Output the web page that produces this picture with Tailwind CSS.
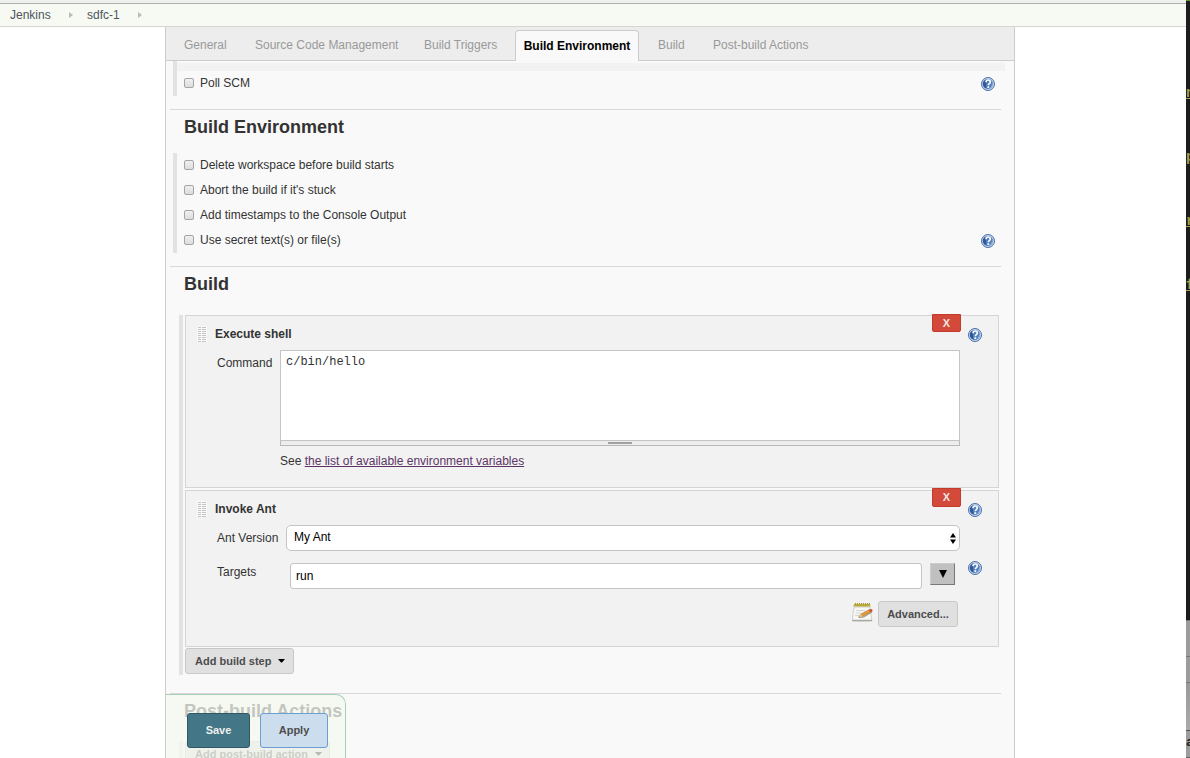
<!DOCTYPE html>
<html lang="en">
<head>
<meta charset="utf-8">
<title>sdfc-1 Config [Jenkins]</title>
<script src="https://cdn.jsdelivr.net/npm/@tailwindcss/browser@4"></script>
</head>
<body class="flex h-screen overflow-hidden bg-white font-['Helvetica','Liberation_Sans',Arial,sans-serif] text-[12px] leading-4 text-[#333]">

<!-- Shared icon symbols -->
<svg class="hidden" aria-hidden="true">
  <symbol id="help" viewBox="0 0 14 14">
    <circle cx="7" cy="7" r="6.500" fill="#c3d3ea" stroke="#4a71ad"/>
    <circle cx="7" cy="7" r="5" fill="#5480bd"/>
    <path d="M2 8.200A5.100 5.100 0 0 1 5.500 2.200C4.800 5.500 4.800 8.500 5.500 11.700A5 5 0 0 1 2 8.200Z" fill="#30599a"/>
    <path d="M8.500 11.800A5 5 0 0 0 12 8V5.500C11 8.500 10 10 8.500 11.800Z" fill="#9ab8de"/>
    <path d="M5 5.200C5 3.500 6 3 7.100 3C8.400 3 9.300 3.800 9.300 4.900C9.300 6.600 7.300 6.500 7.300 8.300" fill="none" stroke="#fff" stroke-width="1.600"/>
    <rect x="6.400" y="9.300" width="1.800" height="1.700" fill="#fff"/>
  </symbol>
  <symbol id="grip" viewBox="0 0 10 16">
    <rect width="10" height="16" fill="#fafafa"/>
    <path d="M1 1.500H9M1 3.500H9M1 5.500H9M1 7.500H9M1 9.500H9M1 11.500H9M1 13.500H9M1 15.500H9" stroke="#c4c4c4" stroke-dasharray="3 1 1 0 3 1"/>
  </symbol>
</svg>

<div class="flex min-w-0 flex-1 flex-col">
  <div class="h-[4px] shrink-0 border-b border-[#b0b0b0] bg-[#f0f0f0]"></div>
  <nav class="flex h-[23px] shrink-0 items-center border-b border-[#d3d7cf] bg-[#f6faf2] pl-[10px] text-[#4d545d]" aria-label="Breadcrumb">
    <a href="#" class="w-[59px]">Jenkins</a>
    <svg class="mr-[14px] h-[6px] w-1" viewBox="0 0 4 6"><path d="M0 0L4 3L0 6Z" fill="#babdb6"/></svg>
    <a href="#" class="w-[51px]">sdfc-1</a>
    <svg class="h-[6px] w-1" viewBox="0 0 4 6"><path d="M0 0L4 3L0 6Z" fill="#babdb6"/></svg>
  </nav>

  <div class="flex min-h-0 flex-1 justify-center pr-[6px]">
    <main class="relative w-full max-w-[850px] overflow-hidden border-x border-[#ccc] bg-[#f9f9f9]">
      <div class="flex h-[34px] items-end border-b border-[#ccc] bg-[#ededed] pl-[9px] text-[#999]" role="tablist">
        <button role="tab" class="h-[30px] w-[71px] pl-[9px] text-left">General</button>
        <button role="tab" class="h-[30px] w-[169px] pl-[9px] text-left whitespace-nowrap">Source Code Management</button>
        <button role="tab" class="h-[30px] w-[100px] pl-[9px] text-left whitespace-nowrap">Build Triggers</button>
        <button role="tab" aria-selected="true" class="-mb-px h-[31px] w-[124px] rounded-t-[4px] border border-b-0 border-[#ccc] bg-[#f9f9f9] pb-px text-[12px] font-bold whitespace-nowrap text-black">Build Environment</button>
        <button role="tab" class="ml-[10px] h-[30px] w-[55px] pl-[9px] text-left">Build</button>
        <button role="tab" class="h-[30px] pl-[9px] text-left whitespace-nowrap">Post-build Actions</button>
      </div>

      <section class="mr-[13px] ml-1 pb-[13px]">
        <div class="ml-[3px] border-l-4 border-[#e2e2e2] pt-[2px]">
          <div class="-mr-1 h-2 bg-[#f2f2f2]"></div>
          <div class="flex h-[25px] items-center pr-[6px] pl-[7px]">
            <label class="mb-[2px] flex items-center gap-[6px]"><input type="checkbox" class="h-[10px] w-[10px] appearance-none rounded-[2px] border border-[#a5a5a5] bg-linear-to-b from-[#f0f0f0] to-[#dcdcdc]">Poll SCM</label>
            <button class="ml-auto" aria-label="Help"><svg class="h-[14px] w-[14px]"><use href="#help"/></svg></button>
          </div>
        </div>
      </section>

      <section class="mr-[13px] ml-1 border-t border-[#d8d8d8] pt-2 pb-[13px]">
        <h2 class="ml-[14px] text-[18px] leading-[18px] font-bold">Build Environment</h2>
        <div class="mt-[17px] ml-[3px] border-l-4 border-[#e2e2e2] pr-[6px] pl-[7px]">
          <div class="flex h-[25px] items-center"><label class="mb-[2px] flex items-center gap-[6px]"><input type="checkbox" class="h-[10px] w-[10px] appearance-none rounded-[2px] border border-[#a5a5a5] bg-linear-to-b from-[#f0f0f0] to-[#dcdcdc]">Delete workspace before build starts</label></div>
          <div class="flex h-[25px] items-center"><label class="mb-[2px] flex items-center gap-[6px]"><input type="checkbox" class="h-[10px] w-[10px] appearance-none rounded-[2px] border border-[#a5a5a5] bg-linear-to-b from-[#f0f0f0] to-[#dcdcdc]">Abort the build if it's stuck</label></div>
          <div class="flex h-[25px] items-center"><label class="mb-[2px] flex items-center gap-[6px]"><input type="checkbox" class="h-[10px] w-[10px] appearance-none rounded-[2px] border border-[#a5a5a5] bg-linear-to-b from-[#f0f0f0] to-[#dcdcdc]">Add timestamps to the Console Output</label></div>
          <div class="flex h-[25px] items-center">
            <label class="mb-[2px] flex items-center gap-[6px]"><input type="checkbox" class="h-[10px] w-[10px] appearance-none rounded-[2px] border border-[#a5a5a5] bg-linear-to-b from-[#f0f0f0] to-[#dcdcdc]">Use secret text(s) or file(s)</label>
            <button class="ml-auto" aria-label="Help"><svg class="h-[14px] w-[14px]"><use href="#help"/></svg></button>
          </div>
        </div>
      </section>

      <section class="mr-[13px] ml-1 border-t border-[#d8d8d8] pt-2 pb-[18px]">
        <h2 class="ml-[14px] text-[18px] leading-[18px] font-bold">Build</h2>
        <div class="mt-[22px] mr-[2px] ml-[9px] border-l-4 border-[#e2e2e2] pb-px pl-[2px]">

          <div class="relative border border-[#d5d5d5] bg-[#f2f2f2] pt-[10px] pb-[18px] pl-[11px]">
            <button class="absolute -top-[2px] right-[37px] h-[18px] w-[29px] rounded-b-[2px] border border-[#c23b2a] bg-[#d34a3a] text-[11px] leading-4 font-bold text-[#f2e4e2]" aria-label="Delete step">X</button>
            <div class="flex h-4 items-center pr-4">
              <svg class="mr-2 h-4 w-[10px]"><use href="#grip"/></svg>
              <h3 class="font-bold">Execute shell</h3>
              <button class="mt-[2px] ml-auto" aria-label="Help"><svg class="h-[14px] w-[14px]"><use href="#help"/></svg></button>
            </div>
            <div class="mt-2 flex pr-[38px] pl-5">
              <label for="cmd" class="w-[63px] shrink-0 pt-[5px]">Command</label>
              <div class="min-w-0 flex-1">
                <textarea id="cmd" spellcheck="false" class="block h-[91px] w-full resize-none border border-[#c4c4c4] bg-white px-[5px] pt-[3px] font-['Liberation_Mono',monospace] text-[12px] leading-4 outline-none">c/bin/hello</textarea>
                <div class="flex h-[5px] justify-center border-x border-b border-[#b8b8b8] bg-[#ededed] pt-px"><span class="h-[2px] w-6 bg-[#a0a0a0]"></span></div>
                <p class="mt-[7px]">See <a href="#" class="text-[#5c3566] underline">the list of available environment variables</a></p>
              </div>
            </div>
          </div>

          <div class="relative mt-[2px] border border-[#d5d5d5] bg-[#f2f2f2] pt-[10px] pb-[19px] pl-[11px]">
            <button class="absolute -top-[3px] right-[37px] h-[19px] w-[29px] rounded-b-[2px] border border-[#c23b2a] bg-[#d34a3a] pb-px text-[11px] leading-4 font-bold text-[#f2e4e2]" aria-label="Delete step">X</button>
            <div class="flex h-4 items-center pr-4">
              <svg class="mr-2 h-4 w-[10px]"><use href="#grip"/></svg>
              <h3 class="font-bold">Invoke Ant</h3>
              <button class="mt-[2px] ml-auto" aria-label="Help"><svg class="h-[14px] w-[14px]"><use href="#help"/></svg></button>
            </div>
            <div class="mt-2 flex items-center pr-[38px] pl-5">
              <label for="ant" class="w-[69px] shrink-0">Ant Version</label>
              <div class="relative min-w-0 flex-1">
                <select id="ant" class="block h-[26px] w-full appearance-none rounded-[5px] border border-[#c4c4c4] bg-white px-[7px] pb-[2px] text-black"><option>My Ant</option></select>
                <svg class="pointer-events-none absolute top-2 right-1 h-[11px] w-[6px]" viewBox="0 0 6 11"><path d="M3 0L6 4.500H0ZM3 11L6 6.500H0Z"/></svg>
              </div>
            </div>
            <div class="mt-3 flex items-start pr-4 pl-5">
              <label for="targets" class="w-[73px] shrink-0 pt-px">Targets</label>
              <input id="targets" type="text" value="run" class="h-[26px] min-w-0 flex-1 rounded-[3px] border border-[#c4c4c4] bg-white px-[5px] text-black">
              <button class="ml-2 flex h-[22px] w-[25px] items-center justify-center border border-[#ccc] border-r-[#777] border-b-[#777] bg-[#c0c0c0]" aria-label="Expand"><svg class="h-[8px] w-[8px]" viewBox="0 0 8 8"><path d="M0 0H8L4 8Z"/></svg></button>
              <button class="mt-[-2px] ml-[13px]" aria-label="Help"><svg class="h-[14px] w-[14px]"><use href="#help"/></svg></button>
            </div>
            <div class="mt-3 flex items-start justify-end pr-10">
              <svg class="mt-[2px] mr-[5px] h-5 w-[21px]" viewBox="0 0 21 20">
                <path d="M2 4H18L20 17.500Q10 19 0 17.500Z" fill="#f7f7f5" stroke="#d0d0cb"/>
                <path d="M0 17.500H20" stroke="#aaaaa5" stroke-width="1.500"/>
                <path d="M2 1H18L18.500 3.500H1.500Z" fill="#b9a83c"/>
                <path d="M3 .5H18" stroke="#a08f35" stroke-dasharray="1 1"/>
                <path d="M4 7.500H13M3.500 10H10M3 12.500H7" stroke="#d5d5d2"/>
                <path d="M7 14.500L12 14L20 9" stroke="#9b9b95" fill="none"/>
                <path d="M6.500 14L9 11.200L17.500 6.500L19 9L10.500 13.500Z" fill="#e69a3c" stroke="#a06a25" stroke-width=".6"/>
                <path d="M6.500 14L9 11.200L10.500 13.500Z" fill="#e8d3a4"/>
                <path d="M17 6.800L19 6Q21 6.500 20.500 8.200L18.700 9.200Z" fill="#cf4a3b"/>
              </svg>
              <button class="h-[26px] w-20 rounded-[3px] border border-[#c8c8c8] bg-[#e0e0e0] text-[11px] font-bold text-[#4d4d4d]">Advanced...</button>
            </div>
          </div>

          <button class="mt-px flex h-[26px] w-[109px] items-center gap-[7px] rounded-[3px] border border-[#c8c8c8] bg-[#e0e0e0] pl-[9px] text-[11px] font-bold whitespace-nowrap text-[#4d4d4d]">Add build step<svg class="h-[4px] w-[7px] shrink-0" viewBox="0 0 7 4"><path d="M0 0H7L4 3.500H3Z" fill="#000"/></svg></button>
        </div>
      </section>

      <section class="mr-[13px] ml-1 border-t border-[#d8d8d8] pt-2">
        <h2 class="ml-[14px] text-[18px] leading-[18px] font-bold">Post-build Actions</h2>
        <div class="mt-[21px] ml-[9px] border-l-4 border-[#e2e2e2] pl-[2px]">
          <button class="flex h-[26px] w-[145px] items-center gap-[7px] rounded-[3px] border border-[#c8c8c8] bg-[#e0e0e0] pl-[9px] text-[11px] font-bold whitespace-nowrap text-[#4d4d4d]">Add post-build action<svg class="h-[4px] w-[7px] shrink-0" viewBox="0 0 7 4"><path d="M0 0H7L4 3.500H3Z" fill="#000"/></svg></button>
        </div>
      </section>

      <!-- Floating save bar -->
      <div class="absolute bottom-0 left-0 flex h-16 w-[180px] gap-[10px] rounded-tr-[10px] border-t border-r border-[#a8d0b8] bg-[#f4f8ef]/75 pt-[18px] pl-[21px] text-[11px] font-bold">
        <button class="h-[35px] w-[63px] rounded-[3px] border border-[#2f5866] bg-[#437787] pb-px text-[#eee]">Save</button>
        <button class="h-[35px] w-[68px] rounded-[3px] border border-[#6a9fd4] bg-[#ccdded] pb-px text-[#4d4d4d]">Apply</button>
      </div>
    </main>
  </div>
</div>

<!-- Sliver of the window behind -->
<aside class="flex w-1 shrink-0 flex-col overflow-hidden bg-[#9c9c9c] font-['Liberation_Mono',monospace] font-bold text-[#a5a04c]" aria-hidden="true">
  <div class="h-[620px] shrink-0 border-t border-[#5f9a2c] bg-[#1c1c1c] pt-[84px] text-[14px]">
    <div class="h-16 underline">n</div>
    <div class="h-16 underline">p</div>
    <div class="h-16 underline">r</div>
    <div class="h-16 underline">f</div>
  </div>
  <div class="h-[37px] shrink-0 border-y border-[#777]"></div>
  <div class="h-[26px] shrink-0 border-b border-[#777]"></div>
  <div class="h-[48px] shrink-0 border-b border-[#555] bg-linear-to-b from-[#999] to-[#aaa]"></div>
  <div class="flex-1 border-b border-[#666] pt-1 text-[#222]">a</div>
</aside>
</body>
</html>
